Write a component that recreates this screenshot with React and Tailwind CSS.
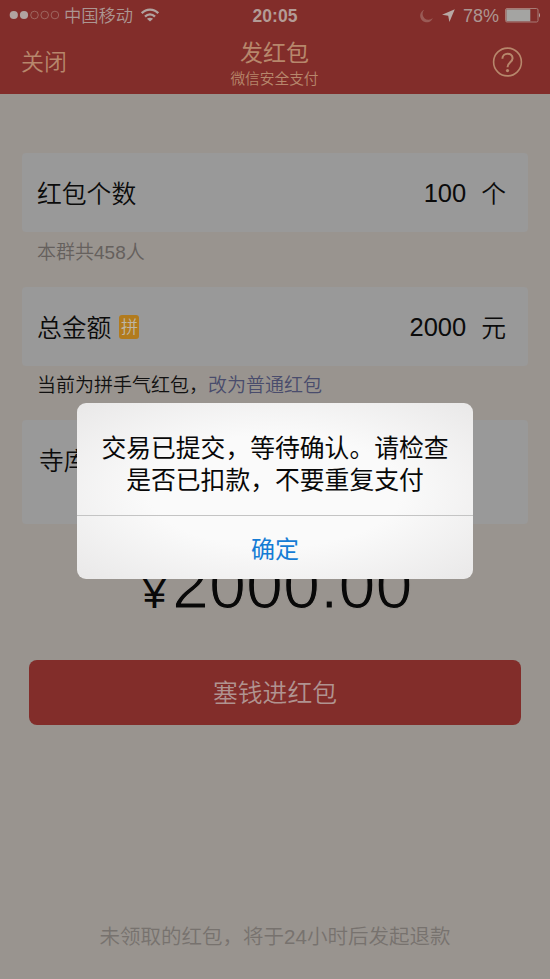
function SignalDots() {
  return (
    <svg width="51" height="10" viewBox="0 0 51 10" className="shrink-0">
      <circle cx="4.8" cy="5" r="4.1" fill="#b1a3a0" />
      <circle cx="15" cy="5" r="4.1" fill="#b1a3a0" />
      {[25.5, 35.7, 45.9].map((cx) => (
        <circle key={cx} cx={cx} cy="5" r="3.8" fill="none" stroke="#a4736c" strokeWidth="0.8" />
      ))}
    </svg>
  );
}

function Wifi() {
  return (
    <svg width="18" height="14" viewBox="0 0 18 14" className="shrink-0" fill="none" stroke="#b1a3a0" strokeWidth="2.3">
      <path d="M0.8 5.2C5.4.3 12.600.3 17.200 5.200" />
      <path d="M4 8.600C6.900 5.700 11.100 5.700 14 8.600" />
      <path d="M9 13.500L5.900 10.700Q9 8.600 12.100 10.700Z" fill="#b1a3a0" stroke="none" />
    </svg>
  );
}

function StatusBar() {
  return (
    <div className="grid h-[31px] grid-cols-[1fr_auto_1fr] items-center text-[#ac9692]">
      <div className="flex items-center pl-[9px]">
        <SignalDots />
        <span className="ml-1 pt-[2px] text-[17.3px] leading-none font-[350]">中国移动</span>
        <span className="ml-2"><Wifi /></span>
      </div>
      <span className="pt-[2px] text-[17.5px] leading-none font-bold text-[#b39b96]">20:05</span>
      <div className="flex items-center justify-end pr-[9px]">
        <svg width="13" height="14" viewBox="0 0 13 14" className="shrink-0">
          <path d="M4.200.8A6.500 6.500 0 1 0 12.800 9A5.300 5.300 0 0 1 4.200.8Z" fill="#9a5b56" />
        </svg>
        <svg width="13" height="13" viewBox="0 0 13 13" className="ml-[9px] shrink-0">
          <path d="M12.800.2L0 5.800L6.200 6.800L7.400 13Z" fill="#b8a8a4" />
        </svg>
        <span className="ml-[8px] pt-px text-[18px] leading-none">78%</span>
        <svg width="36" height="15" viewBox="0 0 36 15" className="ml-[6px] shrink-0">
          <rect x=".5" y=".5" width="32.500" height="13.500" rx="1.500" fill="none" stroke="#a77b75" />
          <rect x="1.300" y="1.300" width="24" height="12" fill="#a4a4a2" />
          <path d="M34 4.800Q36 7.300 34 9.800Z" fill="#b8a8a4" />
        </svg>
      </div>
    </div>
  );
}

function Header() {
  return (
    <header className="h-[94px] bg-[#822d2a]">
      <StatusBar />
      <div className="grid h-[63px] grid-cols-[1fr_auto_1fr] items-center text-[#b7876c]">
        <span className="pl-[21px] text-[23px] leading-none font-[350]">关闭</span>
        <div className="flex flex-col items-center pt-[3px] pr-px">
          <span className="text-[23px] leading-[26px]">发红包</span>
          <span className="mt-[3px] text-[14.7px] leading-[20px] font-[350]">微信安全支付</span>
        </div>
        <div className="flex justify-end pr-[27px]">
          <svg width="31" height="31" viewBox="0 0 31 31" fill="none" stroke="#b7876c" strokeWidth="1.600">
            <circle cx="15.500" cy="15" r="13.900" />
            <path d="M10.400 11.700C10.400 5.100 20.600 5.100 20.600 11.200C20.600 15.300 15.500 15.200 15.500 20.200" strokeWidth="2" />
            <circle cx="15.500" cy="23.600" r="1.600" fill="#b7876c" stroke="none" />
          </svg>
        </div>
      </div>
    </header>
  );
}

function Field({ label, badge, value, unit }) {
  return (
    <div className="mx-[22px] flex h-[79px] items-center rounded-[4px] bg-[#999] pt-[6px] pr-[22px] pl-[15px] text-[24.800px] leading-none text-[#0b0b0b]">
      <span className="font-[350]">{label}</span>
      {badge && (
        <span className="mb-[5px] ml-[8px] flex h-[24px] w-[20px] items-center justify-center rounded-[3px] bg-[#b27b1d] pt-px text-[17px] font-[350] text-[#bdb6a6]">
          {badge}
        </span>
      )}
      <span className="mb-[4px] ml-auto text-[25.500px]">{value}</span>
      <span className="ml-[15px] font-[350]">{unit}</span>
    </div>
  );
}

function Alert() {
  return (
    <div className="absolute top-[403px] left-[77px] flex h-[176px] w-[396px] flex-col overflow-hidden rounded-[9px] bg-[#f3f3f3] bg-[radial-gradient(ellipse_at_center,#fafafa_45%,#e9e8e8_100%)]">
      <p className="flex h-[112px] flex-col items-center pt-[30px] text-[24.800px] leading-[32px] whitespace-nowrap text-[#080808]">
        <span>交易已提交，等待确认。请检查</span>
        <span>是否已扣款，不要重复支付</span>
      </p>
      <button className="flex flex-1 items-center justify-center border-t border-[#c4c4c4] pt-[4px] text-[24px] leading-none text-[#157cd5]">
        确定
      </button>
    </div>
  );
}

export default function App() {
  return (
    <div className="relative flex h-[979px] w-[550px] flex-col overflow-hidden bg-[#99948f] font-['Liberation_Sans','Noto_Sans_CJK_SC',sans-serif]">
      <Header />
      <main className="flex flex-1 flex-col pt-[59px]">
        <Field label="红包个数" value="100" unit="个" />
        <p className="mt-[10px] pl-[37px] text-[19px] leading-[22px] font-[350] text-[#65605d]">本群共458人</p>
        <div className="mt-[23px]" />
        <Field label="总金额" badge="拼" value="2000" unit="元" />
        <p className="mt-[9px] pl-[37px] text-[19px] leading-[22px] font-[350] text-[#111]">
          当前为拼手气红包，<span className="text-[#494c6c]">改为普通红包</span>
        </p>
        <div className="mx-[22px] mt-[23px] h-[104px] rounded-[4px] bg-[#999] pt-[29px] pl-[17px] text-[24.800px] leading-[26px] font-[350] text-[#0b0b0b]">
          寺库
        </div>
        <div className="mt-[28px] flex h-[66px] items-baseline justify-center pl-[5px] leading-[66px] text-[#080808]">
          <span className="text-[42px]">¥</span>
          <span className="ml-[6px] text-[66.500px] [-webkit-text-stroke:1.200px_#99948f]">2000.00</span>
        </div>
        <button className="mx-[29px] mt-[42px] flex h-[65px] shrink-0 items-center justify-center rounded-lg bg-[#822d2a] pt-[3px] text-[24.800px] leading-none font-[350] text-[#b09390]">
          塞钱进红包
        </button>
        <p className="mt-auto pb-[31px] text-center text-[20.500px] leading-[22px] font-[350] text-[#77726e]">未领取的红包，将于24小时后发起退款</p>
      </main>
      <Alert />
    </div>
  );
}
